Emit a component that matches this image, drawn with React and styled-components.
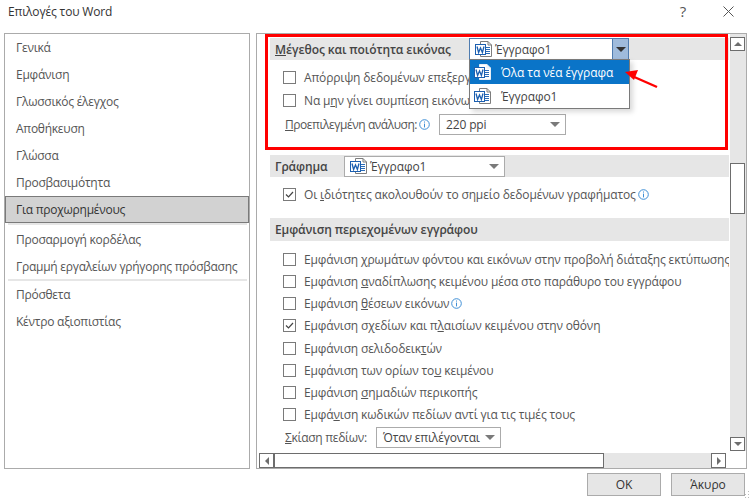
import React from 'react'
import styled, { createGlobalStyle } from 'styled-components'

const Global = createGlobalStyle`
  html, body { margin: 0; padding: 0; background: #fff; }
  body { font-family: "Open Sans", "Noto Sans", sans-serif; font-size: 12px; color: #444; }
  * { box-sizing: border-box; }
`

const Dialog = styled.div`
  position: relative;
  width: 750px;
  height: 500px;
  overflow: hidden;
  display: flex;
  flex-direction: column;
  background: #fff;
`

const TitleBar = styled.div`
  height: 33px;
  display: flex;
  align-items: flex-start;
  padding: 3px 0 0 8px;
`

const Title = styled.div`
  flex: 1;
  color: #333;
  line-height: 16px;
  padding-top: 1px;
  letter-spacing: -0.15px;
`

const HelpBtn = styled.div`
  width: 12px;
  margin-right: 34px;
  font-size: 15px;
  line-height: 17px;
  color: #555;
  text-align: center;
`

const CloseBtn = styled.svg`
  margin: 3px 16px 0 0;
`

const Body = styled.div`
  display: flex;
  gap: 6px;
  padding: 0 3px 0 4px;
  height: 436px;
`

const Nav = styled.nav`
  width: 246px;
  border: 1px solid #ababab;
  display: flex;
  flex-direction: column;
`

const NavItem = styled.div`
  height: 27px;
  line-height: 27px;
  padding-left: 11px;
  color: ${p => (p.$active ? '#333' : '#555')};
  letter-spacing: -0.25px;
  ${p => p.$active && 'background: #d2d2d2; border: 1px solid #7a7a7a; padding-left: 10px; line-height: 25px;'}
`

const NavSep = styled.div`
  height: 2px;
  background: #e6e6e6;
  margin: ${p => (p.$tight ? '-1px 2px 0 3px' : '0 2px 1px 3px')};
`

const Pane = styled.div`
  position: relative;
  flex: 1;
  border: 1px solid #ababab;
  display: flex;
  flex-direction: column;
`

const Upper = styled.div`
  display: flex;
  height: 417px;
`

const Main = styled.div`
  width: 472px;
  overflow: hidden;
  padding: 4px 0 0 13px;
  white-space: nowrap;
`

const SectionHead = styled.div`
  height: ${p => p.$h || 22}px;
  background: #e6e6e6;
  display: flex;
  align-items: center;
  padding-left: 5px;
  font-weight: 600;
  color: #444;
  margin-top: ${p => p.$top || 0}px;
  margin-bottom: ${p => p.$bottom || 0}px;
  letter-spacing: -0.1px;
`

const HeadLabel = styled.span`
  width: ${p => p.$w}px;
  flex: none;
`

const Row = styled.div`
  height: ${p => p.$h || 22.25}px;
  display: flex;
  align-items: center;
  padding-left: ${p => p.$left || 13}px;
  color: #555;
  letter-spacing: -0.15px;
`

const FieldLabel = styled.span`
  width: ${p => p.$w}px;
  flex: none;
  letter-spacing: ${p => p.$tight || -0.15}px;
`

const Check = styled.span`
  width: 13px;
  height: 13px;
  flex: none;
  border: 1px solid #7a7a7a;
  background: #fff;
  margin-right: 8px;
  display: flex;
  align-items: center;
  justify-content: center;
`

const Select = styled.div`
  position: relative;
  width: ${p => p.$w}px;
  height: ${p => p.$h || 21}px;
  flex: none;
  margin-left: ${p => p.$left || 0}px;
  border: 1px solid ${p => (p.$focus ? '#4f7cb0' : '#ababab')};
  background: #fff;
  display: flex;
  align-items: center;
  padding-left: ${p => p.$pad || 6}px;
  color: #444;
  font-weight: 400;
`

const SelectText = styled.span`
  margin-left: 2px;
`

const Caret = styled.span`
  margin-left: auto;
  width: ${p => (p.$focus ? 16 : 20)}px;
  align-self: stretch;
  display: flex;
  align-items: center;
  justify-content: center;
  ${p => p.$focus && 'background: #9fbbdc; border-left: 1px solid #4f7cb0;'}
  &::before {
    content: '';
    border-left: 5px solid transparent;
    border-right: 5px solid transparent;
    border-top: 5px solid ${p => (p.$focus ? '#333' : '#7a7a7a')};
  }
`

const DropList = styled.div`
  position: absolute;
  top: 20px;
  left: -1px;
  width: 161px;
  height: 50px;
  z-index: 3;
  border: 1px solid #7a7a7a;
  background: #fff;
  box-shadow: 3px 3px 5px rgba(0, 0, 0, 0.15);
`

const DropItem = styled.div`
  height: 24px;
  display: flex;
  align-items: center;
  padding-left: 4px;
  gap: 9px;
  letter-spacing: -0.1px;
  color: ${p => (p.$active ? '#fff' : '#444')};
  background: ${p => (p.$active ? '#0a74c8' : '#fff')};
`

const Marker = styled.div`
  position: absolute;
  left: 8px;
  top: 0;
  width: 463px;
  height: 116px;
  border: 3px solid #f00;
  z-index: 2;
  pointer-events: none;
`

const Arrow = styled.svg`
  position: absolute;
  left: 360px;
  top: 28px;
  z-index: 4;
`

const VBar = styled.div`
  width: 16px;
  margin-left: 1px;
  background: #e6e6e6;
  display: flex;
  flex-direction: column;
  padding-top: 3px;
`

const ScrollBtn = styled.div`
  width: ${p => p.$w || 15}px;
  height: ${p => p.$h || 14}px;
  flex: none;
  background: #fff;
  border: 1px solid #6d6d6d;
  display: flex;
  align-items: center;
  justify-content: center;
  color: #6d6d6d;
`

const Thumb = styled.div`
  width: 15px;
  height: 51px;
  margin-top: 112px;
  margin-bottom: auto;
  background: #fff;
  border: 1px solid #6d6d6d;
`

const HBar = styled.div`
  margin: 2px 0 0 2px;
  width: 467px;
  height: 15px;
  background: #e6e6e6;
  display: flex;
`

const HThumb = styled.div`
  width: 330px;
  background: #fff;
  border: 1px solid #6d6d6d;
  margin-right: auto;
`

const Footer = styled.div`
  display: flex;
  justify-content: flex-end;
  gap: 10px;
  padding: 4px 5px 0 0;
`

const Button = styled.div`
  width: ${p => p.$w}px;
  height: 23px;
  background: #e6e6e6;
  border: 1px solid #ababab;
  display: flex;
  align-items: center;
  justify-content: center;
  color: #333;
`

const Grip = styled.svg`
  position: absolute;
  right: 0;
  bottom: 0;
`

const Triangle = ({ dir }) => {
  const pts = {
    up: '0,5 4,1 8,5',
    down: '0,1 8,1 4,5',
    left: '6,0 6,8 2,4',
    right: '2,0 2,8 6,4',
  }
  const horiz = dir === 'left' || dir === 'right'
  return (
    <svg width={8} height={horiz ? 8 : 6} viewBox={horiz ? '0 0 8 8' : '0 0 8 6'}>
      <polygon points={pts[dir]} fill="#6d6d6d" />
    </svg>
  )
}

const WordIcon = ({ light }) => (
  <svg width="18" height="16" viewBox="0 0 18 16" style={{ flex: 'none' }}>
    <path d="M5.5 .5H13L16.5 4V15.5H5.5Z" fill="#fff" stroke={light ? '#e8eef5' : '#7d7d7d'} />
    <path d="M13 .5V4H16.5" fill="none" stroke={light ? '#e8eef5' : '#7d7d7d'} />
    <path d="M11 6.5H15M11 8.5H15M11 10.5H15M11 12.5H15" stroke="#2b6cb8" />
    <rect x=".5" y="3.5" width="10" height="10" fill="#fff" stroke="#1c5fb0" />
    <path d="M2 5.5L3.6 11.5L5.5 7L7.4 11.5L9 5.5" fill="none" stroke="#1c5fb0" strokeWidth="1.3" />
  </svg>
)

const Tick = () => (
  <svg width="11" height="11" viewBox="0 0 11 11">
    <path d="M2 5.5L4.5 8L9 3" fill="none" stroke="#444" strokeWidth="1.2" />
  </svg>
)

const Info = () => (
  <svg width="11" height="11" viewBox="0 0 11 11" style={{ marginLeft: 2, flex: 'none' }}>
    <circle cx="5.5" cy="5.5" r="4.8" fill="none" stroke="#3f8fd6" />
    <path d="M5.5 2.5V3.6M5.5 4.6V8.4" stroke="#3f8fd6" />
  </svg>
)

const navTop = ['Γενικά', 'Εμφάνιση', 'Γλωσσικός έλεγχος', 'Αποθήκευση', 'Γλώσσα', 'Προσβασιμότητα']

const displayRows = [
  [<>Εμφάνιση <u>χ</u>ρωμάτων φόντου και εικόνων στην προβολή διάταξης εκτύπωσης</>],
  [<>Εμφάνιση <u>α</u>ναδίπλωσης κειμένου μέσα στο παράθυρο του εγγράφου</>],
  [<>Εμφάνιση <u>θ</u>έσεων εικόνων</>, false, true],
  [<>Εμφάνιση σχεδίων και π<u>λ</u>αισίων κειμένου στην οθόνη</>, true],
  [<>Εμφάνιση σελιδοδεικ<u>τ</u>ών</>],
  [<>Εμφάνιση των ορίων το<u>υ</u> κειμένου</>],
  [<>Εμφάνιση <u>σ</u>ημαδιών περικοπής</>],
  [<>Εμφά<u>ν</u>ιση κωδικών πεδίων αντί για τις τιμές τους</>],
]

export default function App() {
  return (
    <>
      <Global />
      <Dialog>
        <TitleBar>
          <Title>Επιλογές του Word</Title>
          <HelpBtn>?</HelpBtn>
          <CloseBtn width="11" height="11" viewBox="0 0 11 11">
            <path d="M.5 .5L10.5 10.5M10.5 .5L.5 10.5" stroke="#555" />
          </CloseBtn>
        </TitleBar>
        <Body>
          <Nav>
            {navTop.map(t => <NavItem key={t}>{t}</NavItem>)}
            <NavItem $active>Για προχωρημένους</NavItem>
            <NavSep />
            <NavItem>Προσαρμογή κορδέλας</NavItem>
            <NavItem>Γραμμή εργαλείων γρήγορης πρόσβασης</NavItem>
            <NavSep $tight />
            <NavItem>Πρόσθετα</NavItem>
            <NavItem>Κέντρο αξιοπιστίας</NavItem>
          </Nav>
          <Pane>
            <Upper>
              <Main>
                <SectionHead $bottom={6}>
                  <HeadLabel $w={194}><u>Μ</u>έγεθος και ποιότητα εικόνας</HeadLabel>
                  <Select $w={160} $h={22} $focus $pad={5}>
                    <WordIcon />
                    <SelectText>Έγγραφο1</SelectText>
                    <Caret $focus />
                    <DropList>
                      <DropItem $active><WordIcon light /><span>Όλα τα νέα έγγραφα</span></DropItem>
                      <DropItem><WordIcon /><span>Έγγραφο1</span></DropItem>
                    </DropList>
                  </Select>
                </SectionHead>
                <Row $h={23}><Check /><span>Απόρριψη δεδομένων επεξεργασίας εικόνων</span></Row>
                <Row $h={23}><Check /><span>Να μ<u>η</u>ν γίνει συμπίεση εικόνων στο αρχείο</span></Row>
                <Row $h={24} $left={15}>
                  <FieldLabel $tight={-0.45}><u>Π</u>ροεπιλεγμένη ανάλυση:</FieldLabel><Info />
                  <Select $w={127} $left={9} $pad={6}>220 ppi<Caret /></Select>
                </Row>
                <SectionHead $top={19} $bottom={6}>
                  <HeadLabel $w={69}>Γράφημα</HeadLabel>
                  <Select $w={161} $pad={5}>
                    <WordIcon />
                    <SelectText>Έγγραφο1</SelectText>
                    <Caret />
                  </Select>
                </SectionHead>
                <Row $h={23}>
                  <Check><Tick /></Check>
                  <span>Οι <u>ι</u>διότητες ακολουθούν το σημείο δεδομένων γραφήματος</span><Info />
                </Row>
                <SectionHead $top={12} $h={23} $bottom={7}>Εμφάνιση περιεχομένων εγγράφου</SectionHead>
                {displayRows.map(([label, on, info], i) => (
                  <Row key={i}>
                    <Check>{on && <Tick />}</Check><span>{label}</span>{info && <Info />}
                  </Row>
                ))}
                <Row $left={15}>
                  <FieldLabel $w={91} $tight={-0.3}><u>Σ</u>κίαση πεδίων:</FieldLabel>
                  <Select $w={125} $pad={6}>Όταν επιλέγονται<Caret /></Select>
                </Row>
              </Main>
              <VBar>
                <ScrollBtn><Triangle dir="up" /></ScrollBtn>
                <Thumb />
                <ScrollBtn><Triangle dir="down" /></ScrollBtn>
              </VBar>
            </Upper>
            <HBar>
              <ScrollBtn $h={15}><Triangle dir="left" /></ScrollBtn>
              <HThumb />
              <ScrollBtn $h={15}><Triangle dir="right" /></ScrollBtn>
            </HBar>
            <Marker />
            <Arrow width="50" height="30" viewBox="0 0 50 30">
              <path d="M40 25L15 14" stroke="#f00" strokeWidth="2.4" />
              <polygon points="8,10 21,8 17,18" fill="#f00" />
            </Arrow>
          </Pane>
        </Body>
        <Footer>
          <Button $w={74}>OK</Button>
          <Button $w={74}>Άκυρο</Button>
        </Footer>
        <Grip width="6" height="10" viewBox="0 0 6 10">
          <path d="M4 1h1v1H4zM4 4h1v1H4zM1 4h1v1H1zM4 7h1v1H4zM1 7h1v1H1z" fill="#bbb" />
        </Grip>
      </Dialog>
    </>
  )
}
